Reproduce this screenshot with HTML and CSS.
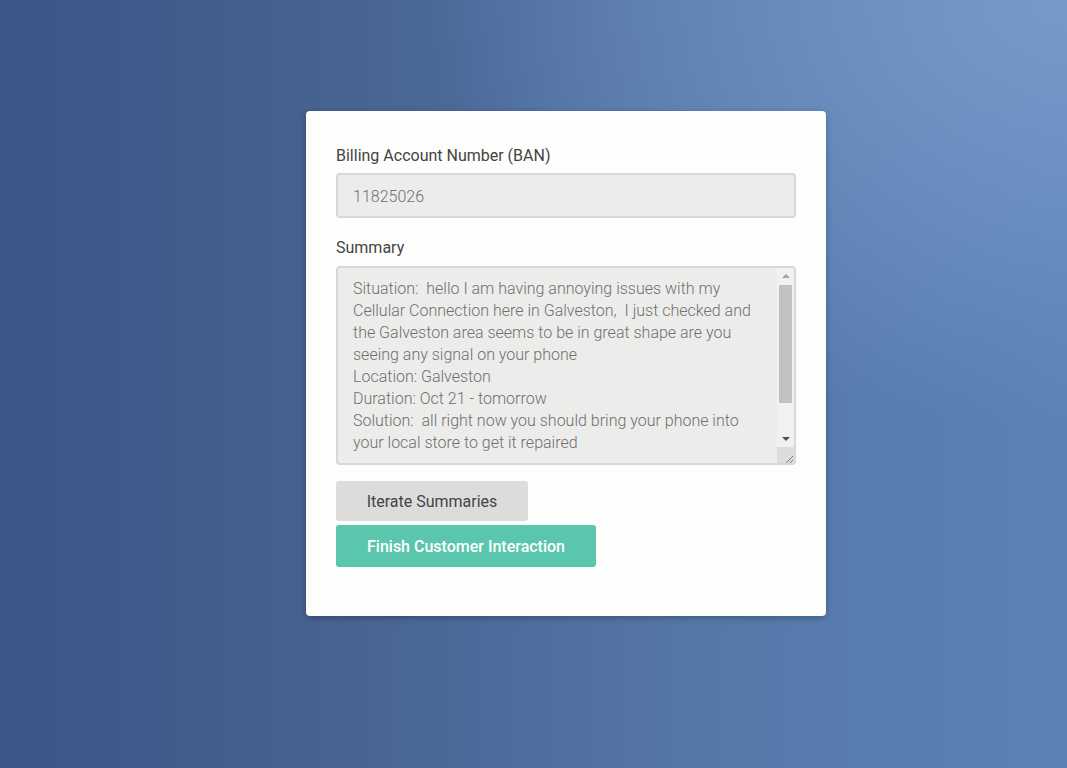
FILE: index.html
```html
<!DOCTYPE html>
<html lang="en">
<head>
<meta charset="utf-8">
<title>Customer Interaction</title>
<link rel="stylesheet" href="styles.css">
</head>
<body>
<main class="page">
  <section class="card">
    <label class="label" for="ban">Billing Account Number (BAN)</label>
    <input class="field" id="ban" type="text" value="11825026" readonly>
    <label class="label label-summary" for="summary">Summary</label>
    <div class="area-wrap">
      <textarea class="field area" id="summary" readonly>Situation:  hello I am having annoying issues with my Cellular Connection here in Galveston,  I just checked and the Galveston area seems to be in great shape are you seeing any signal on your phone
Location: Galveston
Duration: Oct 21 - tomorrow
Solution:  all right now you should bring your phone into your local store to get it repaired


</textarea>
      <div class="scrollbar" aria-hidden="true">
        <div class="sb-btn"><span class="tri-up"></span></div>
        <div class="sb-track"><div class="sb-thumb"></div></div>
        <div class="sb-btn"><span class="tri-down"></span></div>
        <div class="sb-corner">
          <svg width="17" height="16" viewBox="0 0 17 16"><path d="M16 9 L9 16 M16 13 L13 16" stroke="#7a7a7a" stroke-width="1" fill="none"/></svg>
        </div>
      </div>
    </div>
    <div class="actions">
      <button class="btn btn-gray" type="button">Iterate Summaries</button>
      <button class="btn btn-green" type="button">Finish Customer Interaction</button>
    </div>
  </section>
</main>
</body>
</html>
```
FILE: styles.css
```css
html, body {
  margin: 0;
  height: 100%;
}
body {
  font-family: Roboto, "Noto Sans", Arial, sans-serif;
  background:
    radial-gradient(ellipse 60% 55% at 100% 0%, rgba(122, 156, 204, 0.9), rgba(122, 156, 204, 0) 100%),
    linear-gradient(to right, #3a5587 0%, #46628f 30%, #5577a8 65%, #5b83b6 100%);
  overflow: hidden;
}
.page {
  display: flex;
  align-items: flex-start;
  padding: 111px 0 0 306px;
}
.card {
  width: 460px;
  background: #fdfdfc;
  border-radius: 4px;
  box-shadow: 0 2px 6px rgba(0, 0, 0, 0.25);
  padding: 34px 30px 49px;
  display: flex;
  flex-direction: column;
}
.label {
  display: block;
  font-size: 16px;
  line-height: 22px;
  color: #444;
  margin-bottom: 6px;
}
.label-summary {
  margin-top: 19px;
  margin-bottom: 7px;
}
.field {
  box-sizing: border-box;
  width: 460px;
  height: 45px;
  margin: 0;
  border: 2px solid #d7d7d7;
  border-radius: 4px;
  background: #ececeb;
  font-family: Roboto, "Noto Sans", Arial, sans-serif;
  font-size: 16px;
  font-weight: 300;
  color: #6f6f6f;
  padding: 1px 15px 0;
  outline: none;
}
.area-wrap {
  position: relative;
  width: 460px;
  height: 199px;
}
.area {
  display: block;
  height: 199px;
  padding: 10px 32px 10px 15px;
  line-height: 22px;
  resize: none;
  overflow: hidden;
}
.scrollbar {
  position: absolute;
  top: 2px;
  right: 2px;
  bottom: 2px;
  width: 17px;
  display: flex;
  flex-direction: column;
  background: #f1f1f1;
  border-top-right-radius: 2px;
}
.sb-btn {
  height: 16px;
  display: flex;
  align-items: center;
  justify-content: center;
  flex: none;
}
.tri-up {
  width: 0;
  height: 0;
  border-left: 4px solid transparent;
  border-right: 4px solid transparent;
  border-bottom: 4px solid #a3a3a3;
}
.tri-down {
  width: 0;
  height: 0;
  border-left: 4px solid transparent;
  border-right: 4px solid transparent;
  border-top: 4px solid #505050;
}
.sb-track {
  flex: 1;
  padding-top: 1px;
}
.sb-thumb {
  height: 118px;
  margin: 0 2px;
  background: #c1c1c1;
}
.sb-corner {
  height: 16px;
  flex: none;
  background: #dcdcdc;
  border-bottom-right-radius: 2px;
}
.sb-corner svg {
  display: block;
}
.actions {
  margin-top: 16px;
  display: flex;
  flex-direction: column;
  align-items: flex-start;
  gap: 4px;
}
.btn {
  border: none;
  border-radius: 3px;
  font-family: Roboto, "Noto Sans", Arial, sans-serif;
  font-size: 16px;
  cursor: pointer;
  padding: 0;
}
.btn-gray {
  width: 192px;
  height: 40px;
  background: #dcdcdc;
  color: #444;
}
.btn-green {
  width: 260px;
  height: 42px;
  background: #5bc6ae;
  color: #fff;
  font-weight: 500;
}
```
